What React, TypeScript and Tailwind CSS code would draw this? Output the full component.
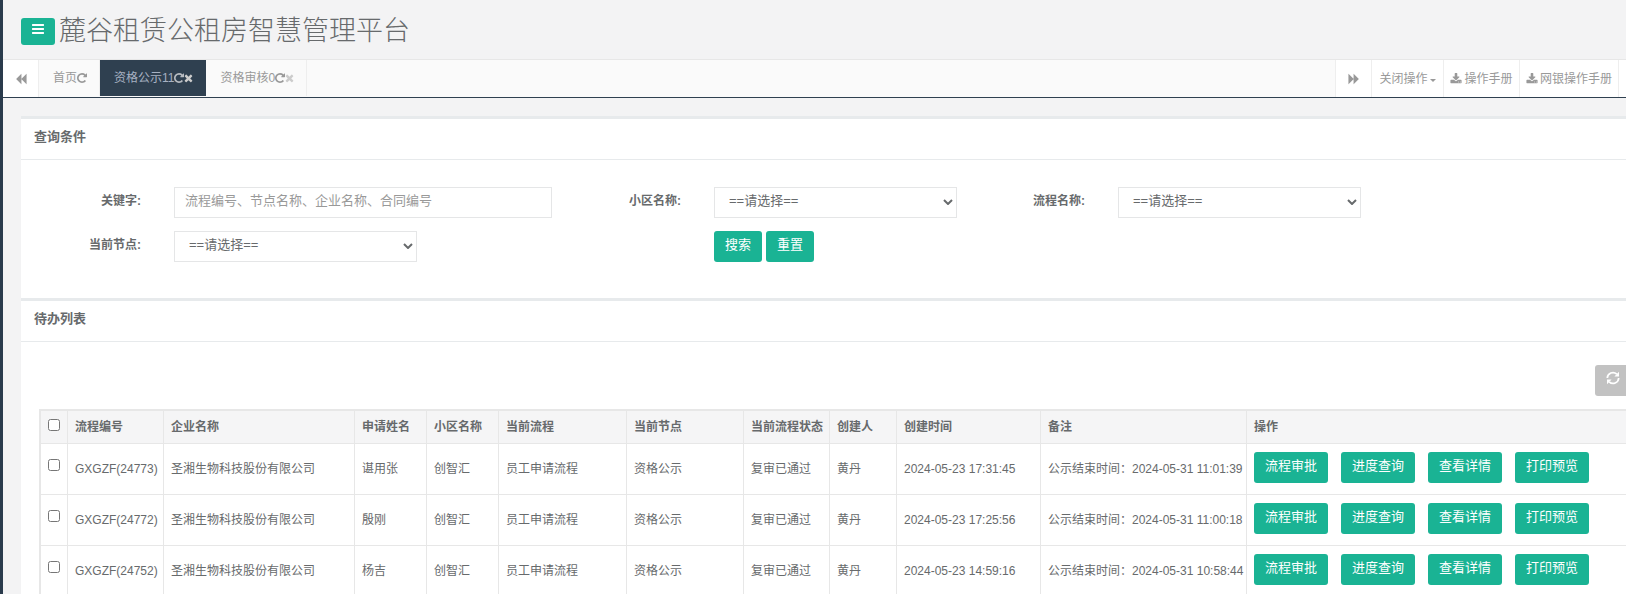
import React, { useState } from 'react';

interface Tab {
  id: string;
  title: string;
  closable: boolean;
}

interface Task {
  id: string;
  company: string;
  applicant: string;
  community: string;
  process: string;
  node: string;
  status: string;
  creator: string;
  createdAt: string;
  remark: string;
}

const TABS: Tab[] = [
  { id: 'home', title: '首页', closable: false },
  { id: 'publicity', title: '资格公示11', closable: true },
  { id: 'review', title: '资格审核0', closable: true }
];

const TASKS: Task[] = [
  {
    id: 'GXGZF(24773)',
    company: '圣湘生物科技股份有限公司',
    applicant: '谌用张',
    community: '创智汇',
    process: '员工申请流程',
    node: '资格公示',
    status: '复审已通过',
    creator: '黄丹',
    createdAt: '2024-05-23 17:31:45',
    remark: '公示结束时间：2024-05-31 11:01:39'
  },
  {
    id: 'GXGZF(24772)',
    company: '圣湘生物科技股份有限公司',
    applicant: '殷刚',
    community: '创智汇',
    process: '员工申请流程',
    node: '资格公示',
    status: '复审已通过',
    creator: '黄丹',
    createdAt: '2024-05-23 17:25:56',
    remark: '公示结束时间：2024-05-31 11:00:18'
  },
  {
    id: 'GXGZF(24752)',
    company: '圣湘生物科技股份有限公司',
    applicant: '杨吉',
    community: '创智汇',
    process: '员工申请流程',
    node: '资格公示',
    status: '复审已通过',
    creator: '黄丹',
    createdAt: '2024-05-23 14:59:16',
    remark: '公示结束时间：2024-05-31 10:58:44'
  }
];

const COLUMNS = [
  { title: '流程编号', width: 'w-[96px]' },
  { title: '企业名称', width: 'w-[191px]' },
  { title: '申请姓名', width: 'w-[72px]' },
  { title: '小区名称', width: 'w-[72px]' },
  { title: '当前流程', width: 'w-[128px]' },
  { title: '当前节点', width: 'w-[117px]' },
  { title: '当前流程状态', width: 'w-[86px]' },
  { title: '创建人', width: 'w-[67px]' },
  { title: '创建时间', width: 'w-[144px]' },
  { title: '备注', width: 'w-[206px]' },
  { title: '操作', width: 'w-auto' }
];

const ACTIONS = ['流程审批', '进度查询', '查看详情', '打印预览'];

const ICONS = {
  bars: 'M1664 1344v128q0 26-19 45t-45 19h-1408q-26 0-45-19t-19-45v-128q0-26 19-45t45-19h1408q26 0 45 19t19 45zm0-512v128q0 26-19 45t-45 19h-1408q-26 0-45-19t-19-45v-128q0-26 19-45t45-19h1408q26 0 45 19t19 45zm0-512v128q0 26-19 45t-45 19h-1408q-26 0-45-19t-19-45v-128q0-26 19-45t45-19h1408q26 0 45 19t19 45z',
  repeat: 'M1664 256v448q0 26-19 45t-45 19h-448q-42 0-59-40-17-39 14-69l138-138q-148-137-349-137-104 0-198.5 40.5t-163.5 109.5-109.5 163.5-40.5 198.5 40.5 198.5 109.5 163.5 163.5 109.5 198.5 40.5q119 0 225-52t179-147q7-10 23-12 15 0 25 9l137 138q9 8 9.5 20.5t-7.5 22.5q-109 132-264 204.5t-327 72.5q-156 0-298-61t-245-164-164-245-61-298 61-298 164-245 245-164 298-61q147 0 284.5 55.5t244.5 156.5l130-129q29-31 70-14 39 17 39 59z',
  times: 'M1490 1322q0 40-28 68l-136 136q-28 28-68 28t-68-28l-294-294-294 294q-28 28-68 28t-68-28l-136-136q-28-28-28-68t28-68l294-294-294-294q-28-28-28-68t28-68l136-136q28-28 68-28t68 28l294 294 294-294q28-28 68-28t68 28l136 136q28 28 28 68t-28 68l-294 294 294 294q28 28 28 68z',
  backward: 'M1683 141q19-19 32-13t13 32v1472q0 26-13 32t-32-13l-710-710q-9-9-13-19v710q0 26-13 32t-32-13l-710-710q-19-19-19-45t19-45l710-710q19-19 32-13t13 32v710q4-10 13-19z',
  forward: 'M109 1651q-19 19-32 13t-13-32v-1472q0-26 13-32t32 13l710 710q9 9 13 19v-710q0-26 13-32t32 13l710 710q19 19 19 45t-19 45l-710 710q-19 19-32 13t-13-32v-710q-4 10-13 19z',
  download: 'M1344 1344q0-26-19-45t-45-19-45 19-19 45 19 45 45 19 45-19 19-45zm256 0q0-26-19-45t-45-19-45 19-19 45 19 45 45 19 45-19 19-45zm128-224v320q0 40-28 68t-68 28h-1472q-40 0-68-28t-28-68v-320q0-40 28-68t68-28h465l135 136q58 56 136 56t136-56l136-136h464q40 0 68 28t28 68zm-325-569q17 41-14 70l-448 448q-18 19-45 19t-45-19l-448-448q-31-29-14-70 17-39 59-39h256v-448q0-26 19-45t45-19h256q26 0 45 19t19 45v448h256q42 0 59 39z'
};

interface IconProps {
  name: keyof typeof ICONS;
  viewBox?: string;
  className?: string;
}

const Icon: React.FC<IconProps> = ({ name, viewBox = '0 0 1792 1792', className = 'size-3' }) => (
  <svg viewBox={viewBox} fill="currentColor" aria-hidden="true" className={`shrink-0 ${className}`}>
    <path d={ICONS[name]} />
  </svg>
);

const RefreshIcon: React.FC = () => (
  <svg viewBox="0 0 14 14" fill="none" stroke="currentColor" strokeWidth="1.7" aria-hidden="true" className="size-3.5">
    <path d="M1.3 7A5.6 5.6 0 0 1 10.8 3.2M12.7 7A5.6 5.6 0 0 1 3.2 10.8" />
    <path d="M13 .8v4.6H8.4zM1 13.2V8.6h4.6z" fill="currentColor" stroke="none" />
  </svg>
);

const Panel: React.FC<{ title: string; children: React.ReactNode }> = ({ title, children }) => (
  <section className="border-t-3 border-[#e7eaec] bg-white">
    <h2 className="border-b border-[#e7eaec] px-[13px] pt-2 pb-3 text-[13px] leading-5 font-bold">{title}</h2>
    {children}
  </section>
);

const SelectField: React.FC<{ id: string; className?: string }> = ({ id, className = '' }) => (
  <div className={`relative h-[31px] min-w-0 ${className}`}>
    <select id={id} className="h-full w-full appearance-none border border-[#e5e6e7] bg-white pr-6 pb-1 pl-3.5 outline-none focus:border-[#1ab394]">
      <option>==请选择==</option>
    </select>
    <svg viewBox="0 0 10 6" fill="none" stroke="currentColor" strokeWidth="2" aria-hidden="true" className="pointer-events-none absolute top-3 right-1 h-1.5 w-2.5">
      <path d="M1 1l4 4 4-4" />
    </svg>
  </div>
);

const PrimaryButton: React.FC<{ children: React.ReactNode; onClick?: () => void; type?: 'button' | 'reset' }> = ({ children, onClick, type = 'button' }) => (
  <button
    type={type}
    onClick={onClick}
    className="h-[31px] rounded-[3px] bg-[#1ab394] px-[11px] pb-[3px] whitespace-nowrap text-white hover:bg-[#18a689]"
  >
    {children}
  </button>
);

const FormLabel: React.FC<{ htmlFor: string; className?: string; children: React.ReactNode }> = ({ htmlFor, className = '', children }) => (
  <label htmlFor={htmlFor} className={`min-w-0 pt-1 pr-[33px] text-right text-xs leading-5 font-bold ${className}`}>{children}</label>
);

const App: React.FC = () => {
  const [activeTab, setActiveTab] = useState('publicity');
  const [selected, setSelected] = useState<string[]>([]);

  const toggleTask = (id: string) => {
    setSelected(prev => prev.includes(id) ? prev.filter(s => s !== id) : [...prev, id]);
  };

  const toggleAll = () => {
    setSelected(prev => prev.length === TASKS.length ? [] : TASKS.map(t => t.id));
  };

  return (
    <div className="min-h-screen overflow-hidden border-l-3 border-[#2a3b4c] bg-[#f3f3f4] font-['Liberation_Sans','Noto_Sans_CJK_SC',sans-serif] text-[13px] text-[#676a6c]">
      <header className="flex h-[59px] items-center gap-1 pt-1 pl-[18px]">
        <button type="button" aria-label="菜单" className="flex h-[27px] w-[34px] justify-center rounded-[3px] bg-[#1ab394] pt-1 text-white">
          <Icon name="bars" className="size-3.5" />
        </button>
        <h1 className="pb-0.5 text-[27px] leading-10 font-light">麓谷租赁公租房智慧管理平台</h1>
      </header>

      {/* Tabs */}
      <nav className="flex h-[39px] border-t border-b border-t-[#e7e7e7] border-b-[#2f4050] bg-[#fafafa] text-xs text-[#999]">
        <button type="button" aria-label="向左" className="flex w-9 items-center justify-center border-r border-[#eee] bg-white">
          <Icon name="backward" />
        </button>
        {TABS.map((tab) => (
          <div
            key={tab.id}
            className={`mb-px flex items-center border-r pr-3 pl-3.5 ${
              activeTab === tab.id ? 'border-[#2f4050] bg-[#2f4050] text-[#a7b1c2]' : 'border-[#eee]'
            }`}
          >
            <button type="button" onClick={() => setActiveTab(tab.id)}>{tab.title}</button>
            <button type="button" aria-label="刷新" className={activeTab === tab.id ? 'text-[#b8bcc2]' : ''}>
              <Icon name="repeat" viewBox="128 0 1536 1792" className="h-3 w-2.5" />
            </button>
            {tab.closable && (
              <button type="button" aria-label="关闭" className="text-[#ccc]">
                <Icon name="times" viewBox="192 0 1408 1792" className="h-3 w-[9px]" />
              </button>
            )}
          </div>
        ))}
        <div className="ml-auto flex bg-white pr-[7px]">
          <button type="button" aria-label="向右" className="flex w-[37px] items-center justify-center border-x border-[#eee]">
            <Icon name="forward" />
          </button>
          <button type="button" className="flex w-[72px] items-center justify-center gap-0.5 border-r border-[#eee]">
            关闭操作
            <svg viewBox="0 0 6 3" fill="currentColor" aria-hidden="true" className="mt-1 h-[3px] w-1.5"><path d="M0 0h6L3 3z" /></svg>
          </button>
          <a href="#manual" className="flex w-[76px] items-center justify-center gap-0.5 border-r border-[#eee]">
            <Icon name="download" />操作手册
          </a>
          <a href="#bank-manual" className="flex w-[99px] items-center justify-center gap-0.5 border-r border-[#eee]">
            <Icon name="download" />网银操作手册
          </a>
        </div>
      </nav>

      <main className="pt-[18px] pl-[18px]">
        <Panel title="查询条件">
          <form className="grid grid-cols-[153fr_387fr_153fr_251fr_153fr_243fr_265fr] gap-y-[13px] pt-[27px] pb-9">
            <FormLabel htmlFor="keyword">关键字:</FormLabel>
            <input
              id="keyword"
              type="text"
              placeholder="流程编号、节点名称、企业名称、合同编号"
              className="mr-[9px] h-[31px] min-w-0 border border-[#e5e6e7] px-2.5 pb-1 outline-none placeholder:text-[#999] focus:border-[#1ab394]"
            />
            <FormLabel htmlFor="community">小区名称:</FormLabel>
            <SelectField id="community" className="mr-2" />
            <FormLabel htmlFor="process">流程名称:</FormLabel>
            <SelectField id="process" />
            <FormLabel htmlFor="node" className="col-start-1">当前节点:</FormLabel>
            <SelectField id="node" className="mr-36" />
            <div className="col-start-4 flex gap-1">
              <PrimaryButton>搜索</PrimaryButton>
              <PrimaryButton type="reset">重置</PrimaryButton>
            </div>
          </form>
        </Panel>

        <Panel title="待办列表">
          <div className="pt-[23px] pl-[18px]">
            <div className="mb-[13px] flex justify-end">
              <button type="button" aria-label="刷新列表" className="flex h-[31px] w-[31px] justify-center rounded-l-[3px] bg-[#c2c2c2] pt-1.5 pl-1 text-white">
                <RefreshIcon />
              </button>
            </div>
            <div className="-mr-2 border-t border-l border-[#e7e7e7]">
              <table className="w-full table-fixed border-collapse text-left text-xs">
                <thead>
                  <tr className="h-[33px] bg-[#f5f5f6]">
                    <th className="w-[27px] border border-[#e7e7e7] text-center">
                      <input type="checkbox" aria-label="全选" checked={selected.length === TASKS.length} onChange={toggleAll} className="size-3" />
                    </th>
                    {COLUMNS.map((col) => (
                      <th key={col.title} className={`border border-[#e7e7e7] px-[7px] font-bold whitespace-nowrap ${col.width}`}>{col.title}</th>
                    ))}
                  </tr>
                </thead>
                <tbody>
                  {TASKS.map((task) => (
                    <tr key={task.id} className="h-[51px]">
                      <td className="border border-[#e7e7e7] pb-1 text-center">
                        <input type="checkbox" aria-label={task.id} checked={selected.includes(task.id)} onChange={() => toggleTask(task.id)} className="size-3" />
                      </td>
                      {[task.id, task.company, task.applicant, task.community, task.process, task.node, task.status, task.creator, task.createdAt, task.remark].map((value, i) => (
                        <td key={i} className="border border-[#e7e7e7] px-[7px] whitespace-nowrap">{value}</td>
                      ))}
                      <td className="border border-[#e7e7e7] px-[7px] pb-1 text-[13px]">
                        <div className="flex gap-[13px]">
                          {ACTIONS.map((action) => (
                            <PrimaryButton key={action}>{action}</PrimaryButton>
                          ))}
                        </div>
                      </td>
                    </tr>
                  ))}
                </tbody>
              </table>
            </div>
          </div>
        </Panel>
      </main>
    </div>
  );
};

export default App;
